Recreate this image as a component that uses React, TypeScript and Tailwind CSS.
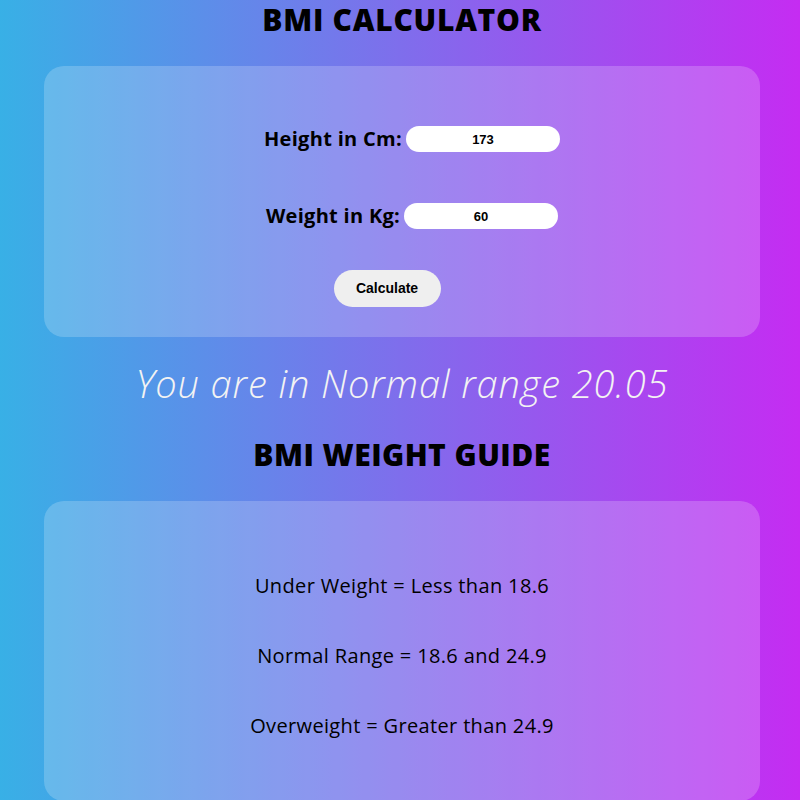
import React, { useState } from "react";

const Field = ({ label, value, onChange }) => {
  return (
    <div className="flex items-center justify-center gap-[4px] pl-[20px] h-[28px]">
      <label className="text-[20px] font-bold text-black leading-none whitespace-nowrap tracking-[0.3px]">
        {label}
      </label>
      <input
        type="text"
        value={value}
        onChange={onChange}
        className="w-[154px] h-[26px] rounded-full bg-white text-center text-[13px] font-bold text-black outline-none font-['Liberation_Sans',Arial,sans-serif]"
      />
    </div>
  );
};

export default function App() {
  const [height, setHeight] = useState("173");
  const [weight, setWeight] = useState("60");

  return (
    <div className="w-full h-[800px] overflow-hidden bg-linear-to-r/srgb from-[#38b0e6] to-[#c52cf2] font-['Open_Sans','Noto_Sans',sans-serif]">
      <h1 className="h-[40px] leading-[40px] text-center text-[30px] font-extrabold text-black tracking-[0.7px] pl-[4px]">
        BMI CALCULATOR
      </h1>

      <div className="ml-[44px] w-[716px] mt-[26px] h-[271px] rounded-[20px] bg-white/20 flex flex-col">
        <div className="mt-[59px]">
          <Field
            label="Height in Cm:"
            value={height}
            onChange={(e) => setHeight(e.target.value)}
          />
        </div>
        <div className="mt-[49px]">
          <Field
            label="Weight in Kg:"
            value={weight}
            onChange={(e) => setWeight(e.target.value)}
          />
        </div>
        <div className="mt-[40px] flex justify-center pr-[30px]">
          <button
            type="button"
            className="w-[107px] h-[37px] rounded-full bg-[#efefef] text-[14px] font-bold text-black font-['Liberation_Sans',Arial,sans-serif]"
          >
            Calculate
          </button>
        </div>
      </div>

      <p className="mt-[21px] h-[50px] leading-[50px] text-center text-[38px] italic font-light text-[#f3f3f3] pl-[4px] tracking-[0.9px]">
        You are in Normal range 20.05
      </p>

      <h2 className="mt-[27px] h-[40px] leading-[40px] text-center text-[30px] font-extrabold text-black tracking-[0.45px] pl-[4px]">
        BMI WEIGHT GUIDE
      </h2>

      <div className="ml-[44px] w-[716px] mt-[26px] h-[300px] rounded-[20px] bg-white/20 flex flex-col items-center text-[20px] text-black tracking-[0.35px]">
        <p className="mt-[70px] h-[30px] leading-[30px]">Under Weight = Less than 18.6</p>
        <p className="mt-[40px] h-[30px] leading-[30px]">Normal Range = 18.6 and 24.9</p>
        <p className="mt-[40px] h-[30px] leading-[30px]">Overweight = Greater than 24.9</p>
      </div>
    </div>
  );
}
